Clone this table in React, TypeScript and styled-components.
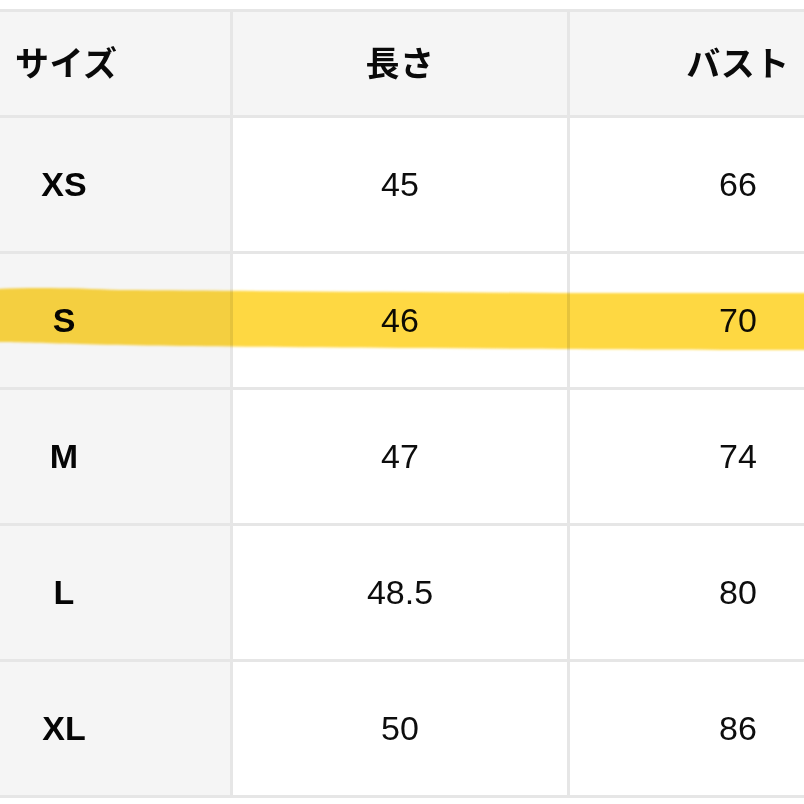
import React from "react";
import styled, { createGlobalStyle } from "styled-components";

const Global = createGlobalStyle`
  html, body {
    margin: 0;
    padding: 0;
    background: #ffffff;
    overflow: hidden;
  }
  #root {
    width: 804px;
    height: 804px;
    overflow: hidden;
  }
`;

const Page = styled.div`
  position: relative;
  width: 804px;
  height: 804px;
  overflow: hidden;
  background: #ffffff;
  padding-top: 9px;
  box-sizing: border-box;
`;

const Table = styled.div`
  display: grid;
  grid-template-columns: 230px 334px 336px;
  grid-template-rows: 103px repeat(5, 133px);
  gap: 3px;
  padding: 3px 0;
  width: 906px;
  background: #e6e6e6;
`;

const Cell = styled.div<{ $shade?: boolean; $align?: "left" | "center" }>`
  display: flex;
  align-items: center;
  justify-content: ${(p) => (p.$align === "left" ? "flex-start" : "center")};
  padding-left: ${(p) => (p.$align === "left" ? "15px" : "0")};
  background: ${(p) => (p.$shade ? "#f5f5f5" : "#ffffff")};
  font-family: "Liberation Sans", Arial, "Noto Sans CJK JP", sans-serif;
  font-size: 34px;
  color: #0d0d0d;
`;

const HeadText = styled.span`
  font-family: "Noto Sans CJK JP", "Noto Sans", sans-serif;
  font-weight: 700;
  font-size: 34px;
  color: #0a0a0a;
  letter-spacing: 0.5px;
  margin-top: -4px;
`;

const SizeLabel = styled.span`
  display: block;
  width: 98px;
  text-align: center;
  font-weight: 700;
  color: #050505;
`;

const Highlighter = styled.svg`
  position: absolute;
  left: 0;
  top: 280px;
  width: 804px;
  height: 80px;
  mix-blend-mode: multiply;
  pointer-events: none;
`;

const rows: [string, string, string][] = [
  ["XS", "45", "66"],
  ["S", "46", "70"],
  ["M", "47", "74"],
  ["L", "48.5", "80"],
  ["XL", "50", "86"],
];

export default function App() {
  return (
    <>
      <Global />
      <Page>
        <Table>
          <Cell $shade $align="left">
            <HeadText>サイズ</HeadText>
          </Cell>
          <Cell $shade>
            <HeadText>長さ</HeadText>
          </Cell>
          <Cell $shade>
            <HeadText>バスト</HeadText>
          </Cell>
          {rows.map(([size, len, bust]) => (
            <React.Fragment key={size}>
              <Cell $shade $align="left">
                <SizeLabel>{size}</SizeLabel>
              </Cell>
              <Cell>{len}</Cell>
              <Cell>{bust}</Cell>
            </React.Fragment>
          ))}
        </Table>
        <Highlighter viewBox="0 0 804 80" preserveAspectRatio="none">
          <defs>
            <filter id="soft" x="-5%" y="-20%" width="110%" height="140%">
              <feGaussianBlur stdDeviation="0.8" />
            </filter>
          </defs>
          <path
            d="M -4 9 C 30 7, 80 8, 120 10 C 250 11, 420 12, 560 13 C 680 13, 760 13, 810 13 L 810 70 C 700 70, 560 69, 400 68 C 260 67, 150 66, 80 64 C 40 63, 10 62, -4 62 Z"
            fill="#fed843"
            filter="url(#soft)"
          />
        </Highlighter>
      </Page>
    </>
  );
}
